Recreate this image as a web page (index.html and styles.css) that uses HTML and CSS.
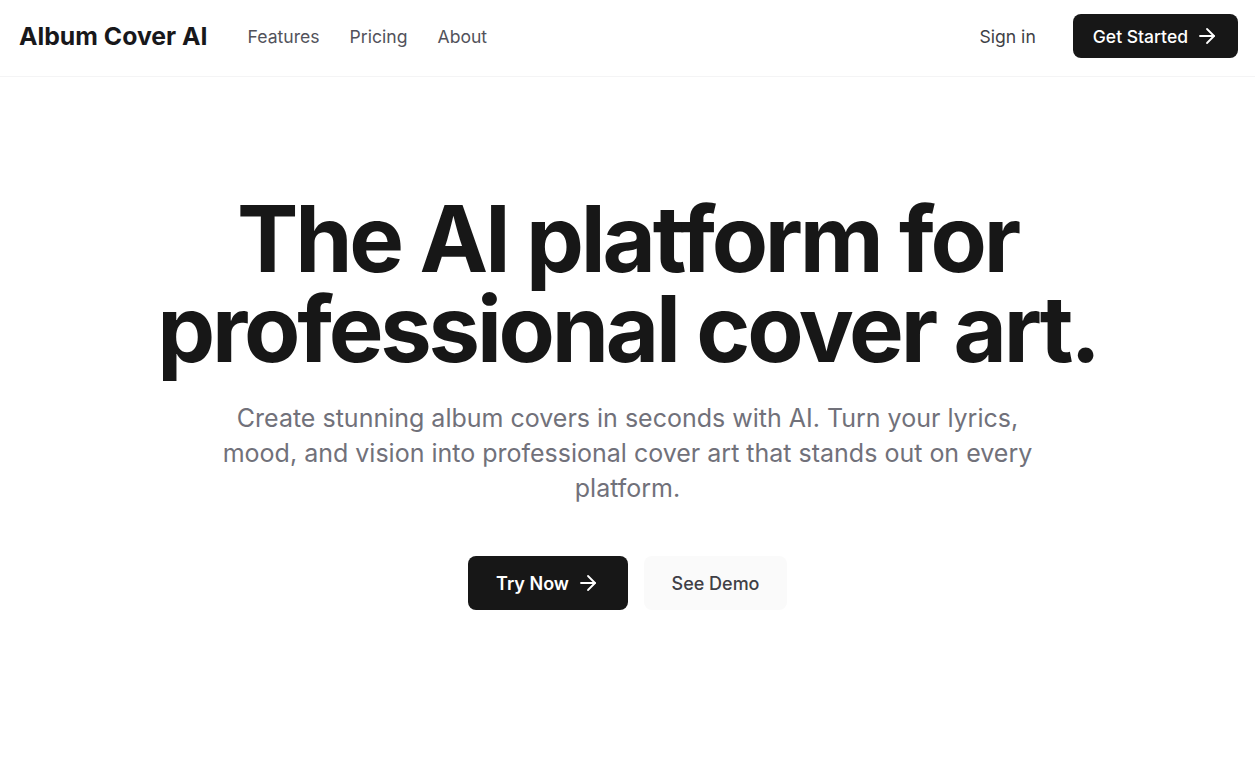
FILE: index.html
```html
<!DOCTYPE html>
<html lang="en">
<head>
<meta charset="utf-8">
<title>Album Cover AI</title>
<link rel="stylesheet" href="styles.css">
</head>
<body>
<header class="nav">
  <div class="nav-left">
    <a class="logo" href="#">Album Cover AI</a>
    <nav class="links">
      <a href="#">Features</a>
      <a href="#">Pricing</a>
      <a href="#">About</a>
    </nav>
  </div>
  <div class="nav-right">
    <a class="signin" href="#">Sign in</a>
    <a class="btn btn-dark btn-nav" href="#">Get Started
      <svg class="arrow" viewBox="0 0 24 24" width="24" height="24" fill="none" stroke="currentColor" stroke-width="1.8" stroke-linecap="round" stroke-linejoin="round"><path d="M5 12h14"/><path d="m12 5 7 7-7 7"/></svg>
    </a>
  </div>
</header>
<main class="hero">
  <h1 class="title">The AI platform for<br>professional cover art.</h1>
  <p class="subtitle">Create stunning album covers in seconds with AI. Turn your lyrics, mood, and vision into professional cover art that stands out on every platform.</p>
  <div class="actions">
    <a class="btn btn-dark btn-lg" href="#">Try Now
      <svg class="arrow" viewBox="0 0 24 24" width="24" height="24" fill="none" stroke="currentColor" stroke-width="1.8" stroke-linecap="round" stroke-linejoin="round"><path d="M5 12h14"/><path d="m12 5 7 7-7 7"/></svg>
    </a>
    <a class="btn btn-light btn-lg" href="#">See Demo</a>
  </div>
</main>
</body>
</html>
```
FILE: styles.css
```css
* { box-sizing: border-box; }
html, body { margin: 0; padding: 0; background: #ffffff; }
body {
  font-family: Inter, "Noto Sans", sans-serif;
  color: #18181b;
  -webkit-font-smoothing: antialiased;
}
a { text-decoration: none; color: inherit; }

.nav {
  height: 77px;
  display: flex;
  align-items: center;
  justify-content: space-between;
  padding: 0 17px 4px 19px;
  border-bottom: 1px solid #f4f4f5;
}
.nav-left { display: flex; align-items: center; gap: 40px; }
.logo { font-size: 24.8px; font-weight: 700; color: #18181b; }
.links { display: flex; gap: 30px; }
.links a { font-size: 17.6px; color: #52525b; }
.nav-right { display: flex; align-items: center; gap: 37px; }
.signin { font-size: 17.6px; color: #3f3f46; }

.btn {
  display: inline-flex;
  align-items: center;
  justify-content: center;
  border-radius: 8px;
  font-size: 18px;
}
.btn-dark { background: #171717; color: #ffffff; }
.btn-nav { height: 44px; padding: 0 19px 0 20px; gap: 7px; font-weight: 500; font-size: 17.5px; }
.btn-lg { height: 54px; font-weight: 600; }
.btn-dark.btn-lg { width: 160px; gap: 7px; }
.btn-light { background: #fafafa; color: #3f3f46; width: 143px; font-weight: 500; }
.arrow { flex: none; }

.hero {
  display: flex;
  flex-direction: column;
  align-items: center;
  text-align: center;
  padding-top: 117px;
}
.title {
  margin: 0;
  font-size: 92px;
  line-height: 90px;
  font-weight: 700;
  letter-spacing: -0.035em;
  color: #171717;
}
.subtitle {
  margin: 27px 0 0;
  max-width: 830px;
  font-size: 25px;
  line-height: 35px;
  color: #71717a;
}
.actions {
  display: flex;
  gap: 16px;
  margin-top: 50px;
}
```
